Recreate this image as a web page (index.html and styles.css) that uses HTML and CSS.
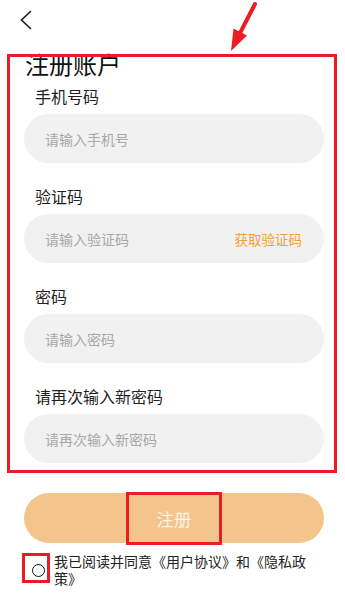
FILE: index.html
```html
<!DOCTYPE html>
<html lang="zh-CN">
<head>
<meta charset="utf-8">
<meta name="viewport" content="width=device-width, initial-scale=1">
<title>注册账户</title>
<link rel="stylesheet" href="styles.css">
</head>
<body>
<div class="page">
  <header class="topbar">
    <svg class="back" width="14" height="22" viewBox="0 0 14 22"><polyline points="11,1 1.5,10 11,19" fill="none" stroke="#222" stroke-width="1.7" stroke-linejoin="miter"/></svg>
  </header>
  <h1 class="title">注册账户</h1>
  <div class="form">
    <div class="field">
      <div class="label">手机号码</div>
      <div class="input"><span class="ph">请输入手机号</span></div>
    </div>
    <div class="field">
      <div class="label">验证码</div>
      <div class="input"><span class="ph">请输入验证码</span><span class="code">获取验证码</span></div>
    </div>
    <div class="field">
      <div class="label">密码</div>
      <div class="input"><span class="ph">请输入密码</span></div>
    </div>
    <div class="field">
      <div class="label">请再次输入新密码</div>
      <div class="input"><span class="ph">请再次输入新密码</span></div>
    </div>
  </div>
  <button class="submit">注册</button>
  <div class="agree">
    <span class="check"></span>
    <p class="agree-text">我已阅读并同意《用户协议》和《隐私政策》</p>
  </div>
</div>
<div class="mark mark-form"></div>
<div class="mark mark-btn"></div>
<div class="mark mark-check"></div>
<svg class="arrow" width="345" height="60" viewBox="0 0 345 60">
  <line x1="255" y1="4" x2="239" y2="35" stroke="#ec1c24" stroke-width="4" stroke-linecap="round"/>
  <polygon points="231,51 233.5,28.5 247,35.5" fill="#ec1c24"/>
</svg>
</body>
</html>
```
FILE: styles.css
```css
* { box-sizing: border-box; }
html, body { margin: 0; padding: 0; background: #fff; }
body {
  position: relative;
  width: 345px;
  min-height: 603px;
  font-family: "Noto Sans CJK SC", "Noto Sans", sans-serif;
  color: #222;
}
.page { padding: 0 21px 0 24px; }
.topbar { height: 40px; padding-top: 10px; }
.back { display: block; margin-left: -4px; }
.title {
  margin: 7px 0 0 1px;
  font-size: 24px;
  line-height: 34px;
  font-weight: 400;
  color: #111;
}
.form { display: flex; flex-direction: column; gap: 22px; margin-top: 4px; }
.field { display: flex; flex-direction: column; gap: 7px; }
.label { font-size: 16px; line-height: 22px; padding-left: 11px; color: #1e1e1e; }
.input {
  height: 49px;
  border-radius: 25px;
  background: #f1f1f1;
  display: flex;
  align-items: center;
  justify-content: space-between;
  padding: 0 22px 0 21px;
}
.ph { font-size: 14px; color: #a8a8a8; }
.code { font-size: 13.5px; color: #f5a033; }
.submit {
  display: flex;
  align-items: center;
  justify-content: center;
  width: 300px;
  height: 50px;
  margin-top: 30px;
  border: none;
  border-radius: 25px;
  background: #f3c48c;
  color: #fdf3e6;
  font-family: inherit;
  font-size: 17.5px;
  padding: 0;
}
.agree { display: flex; align-items: flex-start; margin-top: 10px; margin-left: 8px; }
.check {
  flex: none;
  width: 13px;
  height: 13px;
  margin-top: 11px;
  border: 1.5px solid #111;
  border-radius: 50%;
}
.agree-text {
  margin: 0 0 0 9px;
  width: 258px;
  font-size: 14px;
  line-height: 17px;
  color: #222;
}
.mark { position: absolute; border: 3px solid #ec1c24; }
.mark-form { left: 7px; top: 54px; width: 330px; height: 419px; }
.mark-btn { left: 126px; top: 492px; width: 96px; height: 53px; }
.mark-check { left: 22px; top: 553px; width: 28px; height: 30px; }
.arrow { position: absolute; left: 0; top: 0; }
```
